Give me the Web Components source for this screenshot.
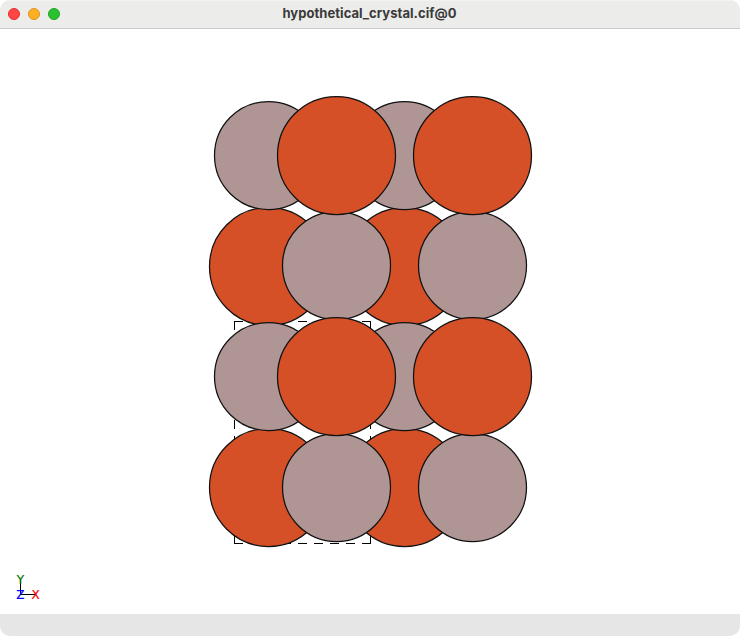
<!DOCTYPE html>
<html lang="en"><head><meta charset="utf-8"><title>Crystal viewer</title>
<style>html,body{margin:0;height:100%;background:#fff;overflow:hidden}</style></head>
<body>
<viewer-window><title-bar slot="title">hypothetical_crystal.cif@0</title-bar><crystal-view></crystal-view></viewer-window>
<script>
customElements.define('title-bar', class extends HTMLElement {
  constructor() {
    super();
    this.attachShadow({mode:'open'}).innerHTML = `
<style>
:host{display:grid;grid-template-columns:1fr auto 1fr;align-items:center;height:29px;background:#ececea;border-bottom:1px solid #cecdcd;box-shadow:inset 0 1px #f3f3f2;font:bold 13px Inter,sans-serif;letter-spacing:.05px;color:#3a3a3a}
.lights{display:flex;gap:8px;padding-left:8px}
i{width:12px;height:12px;border-radius:50%;box-sizing:border-box;border:1px solid}
.r{background:#fe4644;border-color:#e0302f}.y{background:#fdb024;border-color:#dd9320}.g{background:#2ac131;border-color:#1da422}
.t{white-space:nowrap;display:block;line-height:16px;padding:0 1px 2px 0}
</style>
<div class="lights"><i class="r"></i><i class="y"></i><i class="g"></i></div><span class="t"><slot></slot></span>`;
  }
});
customElements.define('crystal-view', class extends HTMLElement {
  constructor() {
    super();
    const G='#b09595', O='#d55027';
    const ball=(x,y,r,f)=>`<circle cx="${x}" cy="${y}" r="${r}" fill="${f}"/>`;
    let s='';
    const left=[268.5,404.5], right=[336.5,472.5];
    for (const x of left) for (const y of [266.5,487.5]) s+=ball(x,y,59,O);
    for (const x of left) for (const y of [155.5,376.5]) s+=ball(x,y,54,G);
    for (const x of right) for (const y of [265.5,487.5]) s+=ball(x,y,54,G);
    for (const x of right) for (const y of [155.5,376.5]) s+=ball(x,y,59,O);
    const side=x=>`<path d="M${x} 321V330M${x} 420V429M${x} 436V445M${x} 536V544"/>`;
    this.attachShadow({mode:'open'}).innerHTML = `
<style>:host{display:block;background:#fff}svg{display:block}text{font:12px "DejaVu Sans",sans-serif;text-anchor:middle;stroke-width:.2px}</style>
<svg width="740" height="585" viewBox="0 29 740 585">
<g stroke="#000" fill="none"><path stroke-dasharray="9 7" d="M234 321.5H371M234 543.5H371"/>${side(234.5)}${side(370.5)}</g>
<g stroke="#111" stroke-width="1.25">${s}</g>
<path d="M20.5 580V594.5H36" fill="none" stroke="#000"/>
<text x="20.3" y="584" fill="#007000" stroke="#007000">Y</text><text x="20.3" y="599" fill="#00f" stroke="#00f">Z</text><text x="35.5" y="599" fill="#f00" stroke="#f00">X</text>
</svg>`;
  }
});
customElements.define('viewer-window', class extends HTMLElement {
  constructor() {
    super();
    this.attachShadow({mode:'open'}).innerHTML = `
<style>:host{display:grid;grid-template-rows:29px 1fr 22px;width:740px;height:636px;border-radius:10px;overflow:hidden}footer{background:#e6e6e6}::slotted(title-bar){box-sizing:border-box}</style>
<slot name="title"></slot><slot></slot><footer></footer>`;
  }
});
</script></body></html>
